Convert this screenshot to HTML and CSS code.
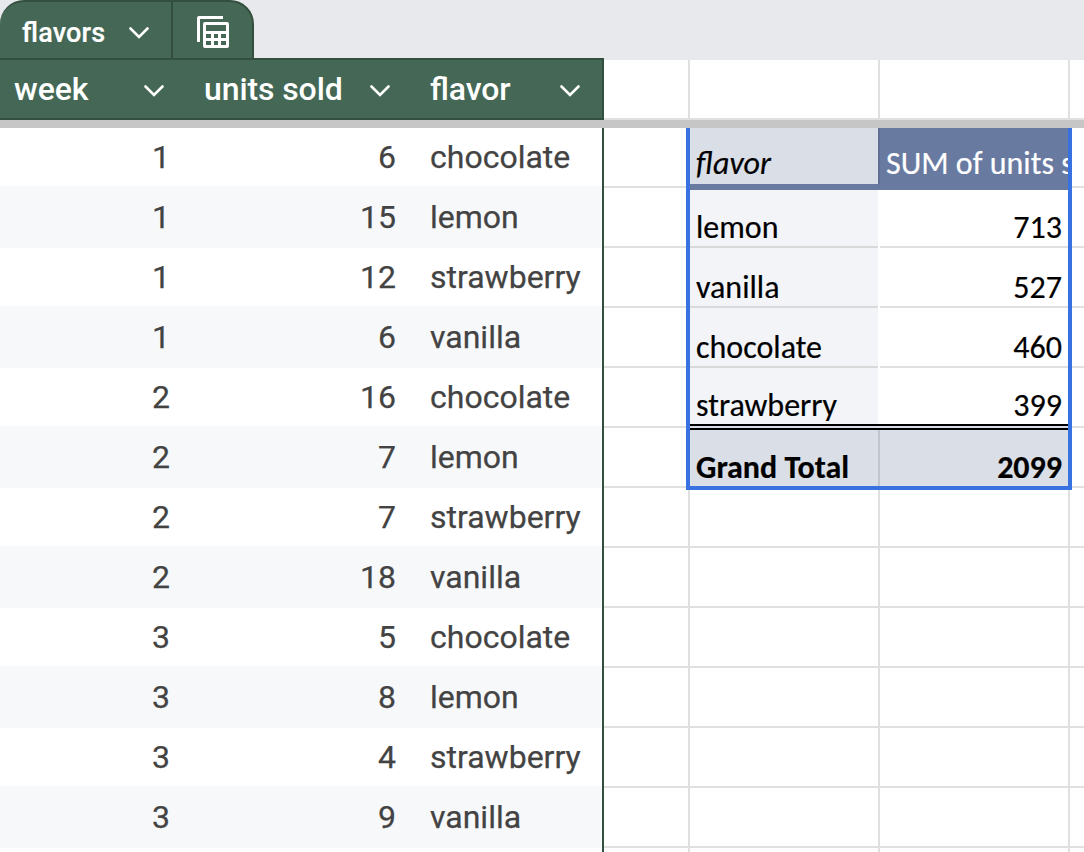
FILE: index.html
```html
<!DOCTYPE html>
<html lang="en">
<head>
<meta charset="utf-8">
<title>flavors</title>
<link rel="stylesheet" href="styles.css">
</head>
<body>
<svg class="defs" width="0" height="0"><symbol id="chevron" viewBox="0 0 20 12"><path d="M1.500 1.500 10 10l8.500-8.500"/></symbol></svg>
<main class="app">
  <nav class="tabs">
    <div class="tab name"><span>flavors</span><svg class="chev"><use href="#chevron"/></svg></div>
    <div class="tab tool">
      <svg class="calc" viewBox="0 0 32 32"><path fill-rule="evenodd" d="M2 0h24v3H3v23H0V2Q0 0 2 0ZM8 6h22q2 0 2 2v22q0 2-2 2H8q-2 0-2-2V8q0-2 2-2Zm1 3v6h20V9ZM9 18v4h5v-4Zm8 0v4h4v-4Zm7 0v4h5v-4ZM9 25v4h5v-4Zm8 0v4h4v-4Zm7 0v4h5v-4Z"/></svg>
    </div>
  </nav>
  <header class="head">
    <div class="columns">
      <div class="col week"><span>week</span><svg class="chev"><use href="#chevron"/></svg></div>
      <div class="col units"><span>units sold</span><svg class="chev"><use href="#chevron"/></svg></div>
      <div class="col kind"><span>flavor</span><svg class="chev"><use href="#chevron"/></svg></div>
    </div>
    <div class="row blank"><i></i><i></i><i></i><i></i></div>
  </header>
  <div class="freeze"></div>
  <div class="body">
    <section class="table">
      <div class="record"><b>1</b><b>6</b><span>chocolate</span></div>
      <div class="record"><b>1</b><b>15</b><span>lemon</span></div>
      <div class="record"><b>1</b><b>12</b><span>strawberry</span></div>
      <div class="record"><b>1</b><b>6</b><span>vanilla</span></div>
      <div class="record"><b>2</b><b>16</b><span>chocolate</span></div>
      <div class="record"><b>2</b><b>7</b><span>lemon</span></div>
      <div class="record"><b>2</b><b>7</b><span>strawberry</span></div>
      <div class="record"><b>2</b><b>18</b><span>vanilla</span></div>
      <div class="record"><b>3</b><b>5</b><span>chocolate</span></div>
      <div class="record"><b>3</b><b>8</b><span>lemon</span></div>
      <div class="record"><b>3</b><b>4</b><span>strawberry</span></div>
      <div class="record"><b>3</b><b>9</b><span>vanilla</span></div>
      <div class="record"></div>
    </section>
    <section class="sheet">
      <div class="row pivot top"><i></i><div class="label"><span>flavor</span></div><div class="value"><span>SUM of units s</span></div><i></i></div>
      <div class="row pivot"><i></i><div class="label"><span>lemon</span></div><div class="value"><span>713</span></div><i></i></div>
      <div class="row pivot"><i></i><div class="label"><span>vanilla</span></div><div class="value"><span>527</span></div><i></i></div>
      <div class="row pivot"><i></i><div class="label"><span>chocolate</span></div><div class="value"><span>460</span></div><i></i></div>
      <div class="row pivot last"><i></i><div class="label"><span>strawberry</span></div><div class="value"><span>399</span></div><i></i></div>
      <div class="row pivot total"><i></i><div class="label"><span>Grand Total</span></div><div class="value"><span>2099</span></div><i></i></div>
      <div class="row"><i></i><i></i><i></i><i></i></div>
      <div class="row"><i></i><i></i><i></i><i></i></div>
      <div class="row"><i></i><i></i><i></i><i></i></div>
      <div class="row"><i></i><i></i><i></i><i></i></div>
      <div class="row"><i></i><i></i><i></i><i></i></div>
      <div class="row"><i></i><i></i><i></i><i></i></div>
      <div class="row"><i></i><i></i><i></i><i></i></div>
      <div class="selection"></div>
    </section>
  </div>
</main>
</body>
</html>
```
FILE: styles.css
```css
*, *::after { box-sizing: border-box; }
body { margin: 0; background: #fff; font-family: Roboto, "Liberation Sans", sans-serif; font-size: 32px; color: #434343; }
.defs { display: block; }
.app { width: 1084px; height: 852px; overflow: hidden; background: #fff; }

.tabs { display: flex; height: 58px; background: #e8e9ed; }
.tab { display: flex; align-items: center; background: #446855; border-top: 2px solid #33503f; color: #fff; }
.name { width: 173px; padding: 5px 0 0 22px; border-top-left-radius: 24px; border-right: 2px solid #33503f; font-size: 27px; font-weight: 500; -webkit-text-stroke: .2px #fff; letter-spacing: .15px; font-feature-settings: "liga"; }
.name span { width: 107px; }
.tool { width: 81px; padding: 4px 0 0 24px; border-top-right-radius: 24px; border-right: 2px solid #33503f; }
.calc { width: 32px; height: 32px; fill: #fff; }
.chev { width: 20px; height: 12px; fill: none; stroke: #fff; stroke-width: 2.600; stroke-linecap: round; stroke-linejoin: miter; }

.head { display: flex; height: 62px; background: linear-gradient(#e8e9ed 2px, #fff 2px); }
.columns { display: flex; width: 604px; background: #446855; border: 2px solid #33503f; border-left: 0; color: #fff; }
.col { display: flex; align-items: center; }
.col .chev { margin-top: 4px; }
.week { width: 190px; padding-left: 14px; }
.week span { width: 130px; }
.units { width: 226px; padding-left: 14px; }
.units span { width: 166px; }
.kind { padding-left: 14px; }
.kind span { width: 130px; }
.col span { font-weight: 500; line-height: 58px; letter-spacing: -.1px; font-feature-settings: "liga"; }
.freeze { height: 8px; background: #c6c6c6; }
.body { display: flex; }

.table { width: 604px; border-right: 2px solid #33503f; -webkit-text-stroke: .25px #434343; }
.record { display: grid; grid-template-columns: 170px 226px 1fr; height: 60px; line-height: 58px; border-bottom: 2px solid #f7f8fa; }
.record:nth-child(even) { background: #f7f8fa; }
.record b { font-weight: 400; text-align: right; }
.record span { padding-left: 34px; }

.sheet { position: relative; width: 480px; }
.row { position: relative; display: grid; grid-template-columns: 86px 190px 190px 14px; height: 60px; }
.row i { border-right: 2px solid #e0e0e0; border-bottom: 2px solid #e0e0e0; }
.row i:last-child { border-right: 0; }
.blank { margin-top: 2px; }

.pivot { font-family: Carlito, Lato, sans-serif; font-size: 32px; line-height: 36px; color: #000; -webkit-text-stroke: .2px; }
.label { padding: 22px 0 0 6px; background: #f3f4f8; border-bottom: 2px solid #d9d9d9; margin-right: 2px; white-space: nowrap; }
.value { padding: 22px 8px 0 0; border-bottom: 2px solid #e0e0e0; text-align: right; white-space: nowrap; overflow: hidden; }
.top .label { padding-top: 18px; background: #dadee6; font-style: italic; }
.top .value { margin-left: -2px; padding: 18px 0 0 6px; background: #697aa1; border-left: 2px solid #5f6e92; color: #fff; text-align: left; }
.top::after { content: ""; position: absolute; left: 86px; width: 380px; top: 56px; height: 6px; background: #697aa1; z-index: 1; }
.last .label, .last .value { padding-top: 20px; }
.last::after { content: ""; position: absolute; left: 86px; width: 380px; top: 56px; height: 6px; border: solid #000; border-width: 2px 0; background: #dadee6; z-index: 1; }
.total { font-weight: 700; }
.total .label { margin: 0; background: #dadee6; }
.total .value { margin-left: -2px; background: #dadee6; border-left: 2px solid #c0c4cc; }
.selection { position: absolute; left: 82px; top: 0; width: 386px; height: 362px; border: 4px solid #3871e0; border-top: 0; z-index: 2; }
```
